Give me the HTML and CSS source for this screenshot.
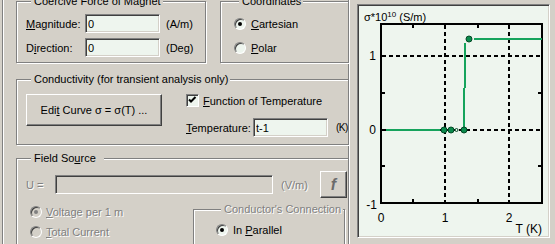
FILE: index.html
```html
<!DOCTYPE html>
<html lang="en">
<head>
  <meta charset="UTF-8">
  <title>Magnet Properties</title>
  <link rel="stylesheet" href="styles.css">
</head>
<body>
  <div class="page">
    <div class="panel">
      <div class="row-top">
        <div class="group g-magnet">
          <div class="group-title">Coercive Force of Magnet</div>
          <div class="field first">
            <label class="lbl"><u>M</u>agnitude:</label>
            <input class="edit" type="text" value="0">
            <span class="unit">(A/m)</span>
          </div>
          <div class="field">
            <label class="lbl">D<u>i</u>rection:</label>
            <input class="edit" type="text" value="0">
            <span class="unit">(Deg)</span>
          </div>
        </div>
        <div class="group g-coords">
          <div class="group-title">Coordinates</div>
          <div class="option first"><span class="radio on"></span><span><u>C</u>artesian</span></div>
          <div class="option second"><span class="radio"></span><span><u>P</u>olar</span></div>
        </div>
      </div>

      <div class="group g-cond">
        <div class="group-title">Conductivity (for transient analysis only)</div>
        <div class="cond-body">
          <button class="btn btn-curve">Edi<u>t</u> Curve σ = σ(T) ...</button>
          <div class="cond-right">
            <div class="option"><span class="check"><svg width="11" height="11" viewBox="0 0 11 11"><polyline points="2,4.5 4,6.5 8.5,2" fill="none" stroke="#000" stroke-width="2"/></svg></span><span><u>F</u>unction of Temperature</span></div>
            <div class="field temp">
              <label class="lbl lbl-temp"><u>T</u>emperature:</label>
              <input class="edit" type="text" value="t-1">
              <span class="unit unit-k">(K)</span>
            </div>
          </div>
        </div>
      </div>

      <div class="group g-source">
        <div class="group-title">Field So<u>u</u>rce&nbsp;&nbsp;</div>
        <div class="u-row">
          <label class="lbl lbl-u off">U =</label>
          <input class="edit edit-u" type="text" value="" disabled>
          <span class="unit unit-v off">(V/m)</span>
          <button class="btn btn-f" disabled>f</button>
        </div>
        <div class="source-body">
          <div class="source-left">
            <div class="option off"><span class="radio on dim"></span><span><u>V</u>oltage per 1 m</span></div>
            <div class="option off"><span class="radio dim"></span><span><u>T</u>otal Current</span></div>
          </div>
          <div class="group g-conn">
            <div class="group-title off">Conductor's Connection</div>
            <div class="option"><span class="radio on"></span><span>In <u>P</u>arallel</span></div>
          </div>
        </div>
      </div>
    </div>

    <div class="chart">
      <svg width="189" height="230" viewBox="0 0 189 230">
        <g stroke="#000" stroke-width="2" stroke-dasharray="4 3" fill="none">
          <line x1="86" y1="19" x2="86" y2="197"/>
          <line x1="150" y1="19" x2="150" y2="197"/>
          <line x1="23" y1="50" x2="183" y2="50"/>
          <line x1="23" y1="124" x2="183" y2="124"/>
        </g>
        <rect x="22" y="18" width="161" height="179" fill="none" stroke="#000" stroke-width="2"/>
        <g stroke="#000" stroke-width="2">
          <line x1="54" y1="18" x2="54" y2="22"/>
          <line x1="119" y1="18" x2="119" y2="22"/>
          <line x1="54" y1="193" x2="54" y2="197"/>
          <line x1="119" y1="193" x2="119" y2="197"/>
          <line x1="22" y1="87" x2="26" y2="87"/>
          <line x1="22" y1="160" x2="26" y2="160"/>
          <line x1="179" y1="87" x2="183" y2="87"/>
          <line x1="179" y1="160" x2="183" y2="160"/>
        </g>
        <g stroke="#16a35c" stroke-width="2" fill="none">
          <line x1="27" y1="124" x2="81" y2="124"/>
          <line x1="105" y1="124" x2="105" y2="82"/>
          <line x1="106" y1="82" x2="106" y2="37"/>
          <line x1="115" y1="33" x2="183" y2="33"/>
        </g>
        <g fill="#0b8a4c" stroke="#044a26" stroke-width="1">
          <circle cx="85" cy="124" r="3"/>
          <circle cx="92" cy="124" r="3"/>
          <circle cx="105" cy="124" r="3"/>
          <circle cx="110" cy="33" r="3"/>
        </g>
        <circle cx="97.5" cy="124" r="1.5" fill="#eef5ee" stroke="#044a26" stroke-width="1"/>
        <g class="axis-text">
          <text x="5" y="15" class="title">σ*10<tspan class="sup" dy="-4">10</tspan><tspan dy="4"> (S/m)</tspan></text>
          <text x="17" y="54" text-anchor="end">1</text>
          <text x="17" y="128" text-anchor="end">0</text>
          <text x="18" y="203" text-anchor="end">-1</text>
          <text x="22" y="216" text-anchor="middle">0</text>
          <text x="86" y="216" text-anchor="middle">1</text>
          <text x="150" y="216" text-anchor="middle">2</text>
          <text x="183" y="227" text-anchor="end">T (K)</text>
        </g>
      </svg>
    </div>
  </div>
</body>
</html>
```

FILE: styles.css
```css
body {
  margin: 0;
  background-color: #d4d0c8;
  color: #000000;
  font-family: "Liberation Sans", Arial, sans-serif;
  font-size: 11px;
  overflow: hidden;
}

u {
  text-decoration-thickness: 1px;
  text-underline-offset: 1px;
}

.page {
  display: flex;
  align-items: flex-start;
  height: 244px;
}

/* left scrolled panel */
.panel {
  flex: none;
  margin-left: 2px;
  width: 333px;
  height: 260px;
  padding: 1px 0 0 13px;
  border-left: 1px solid #808080;
  border-right: 1px solid #ffffff;
  box-shadow: inset 1px 0 #ffffff, inset -1px 0 #808080;
  overflow: hidden;
}

.group {
  box-sizing: border-box;
  flex: none;
  border: 1px solid #808080;
  box-shadow: inset 1px 1px #ffffff, 1px 1px #ffffff;
}

.group-title {
  display: table;
  margin: -7px 0 0 5px;
  padding: 0 2px 0 3px;
  line-height: 13px;
  background-color: #d4d0c8;
  white-space: nowrap;
}

.off {
  color: #808080;
  text-shadow: 1px 1px #ffffff;
}

.row-top {
  display: flex;
  gap: 14px;
}

.g-magnet {
  width: 190px;
  padding: 0 0 5px 9px;
}

.g-coords {
  width: 129px;
  padding-left: 13px;
}

.field {
  display: flex;
  align-items: center;
  height: 19px;
  margin-top: 5px;
  white-space: nowrap;
}

.field.first {
  margin-top: 6px;
}

.lbl {
  flex: none;
  width: 59px;
}

.edit {
  box-sizing: border-box;
  flex: none;
  width: 75px;
  height: 19px;
  margin: 0;
  padding: 0 2px;
  font: inherit;
  color: #000000;
  background-color: #eef5ee;
  border: 1px solid;
  border-color: #808080 #ffffff #ffffff #808080;
  box-shadow: inset 1px 1px #404040, inset -1px -1px #d4d0c8;
  outline: none;
}

.unit {
  flex: none;
  margin-left: 6px;
}

.option {
  display: flex;
  align-items: center;
  gap: 5px;
  height: 12px;
  white-space: nowrap;
}

.g-coords .option.first {
  margin-top: 10px;
}

.g-coords .option.second {
  margin-top: 12px;
}

.radio {
  box-sizing: border-box;
  display: flex;
  align-items: center;
  justify-content: center;
  flex: none;
  width: 12px;
  height: 12px;
  border-radius: 50%;
  background-color: #eef5ee;
  border: 1px solid;
  border-color: #808080 #ffffff #ffffff #808080;
  box-shadow: inset 1px 1px #404040;
}

.radio.on::after {
  content: "";
  width: 4px;
  height: 4px;
  border-radius: 50%;
  background-color: #000000;
}

.radio.dim {
  background-color: #d4d0c8;
}

.radio.dim::after {
  background-color: #808080;
}

.check {
  box-sizing: border-box;
  display: flex;
  flex: none;
  width: 13px;
  height: 13px;
  background-color: #eef5ee;
  border: 1px solid;
  border-color: #808080 #ffffff #ffffff #808080;
  box-shadow: inset 1px 1px #404040;
}

/* conductivity */
.g-cond {
  width: 333px;
  margin-top: 16px;
  padding: 0 0 7px 9px;
}

.cond-body {
  display: flex;
  align-items: flex-start;
  margin-top: 8px;
}

.btn {
  box-sizing: border-box;
  flex: none;
  margin: 0;
  padding: 0;
  font: inherit;
  color: #000000;
  background-color: #d4d0c8;
  border: 1px solid;
  border-color: #ffffff #404040 #404040 #ffffff;
  box-shadow: inset -1px -1px #808080;
}

.btn-curve {
  width: 136px;
  height: 32px;
}

.cond-right {
  flex: none;
  margin-left: 24px;
}

.cond-right .option {
  height: 13px;
  gap: 4px;
}

.field.temp {
  margin-top: 11px;
}

.lbl-temp {
  width: 67px;
}

.unit-k {
  margin-left: 8px;
  font-size: 10px;
  letter-spacing: -0.5px;
}

/* field source */
.g-source {
  width: 333px;
  margin-top: 13px;
  padding: 0 0 20px 9px;
}

.u-row {
  display: flex;
  align-items: center;
  height: 27px;
  margin-top: 6px;
}

.lbl-u {
  width: 29px;
}

.edit-u {
  width: 218px;
  background-color: #d4d0c8;
}

.unit-v {
  width: 39px;
  margin-left: 8px;
}

.btn-f {
  width: 27px;
  height: 27px;
  font-size: 16px;
  font-weight: bold;
  font-style: italic;
  color: #6b6b6b;
}

.source-body {
  display: flex;
  align-items: flex-start;
}

.source-left {
  flex: none;
  width: 163px;
  padding-left: 4px;
}

.source-left .option {
  margin-top: 8px;
  gap: 4px;
}

.g-conn {
  width: 152px;
  margin-top: 11px;
  padding: 0 0 20px 22px;
}

.g-conn .option {
  margin-top: 8px;
}

/* chart */
.chart {
  box-sizing: border-box;
  flex: none;
  width: 193px;
  height: 234px;
  margin: 4px 0 0 7px;
  background-color: #eef5ee;
  border: 1px solid;
  border-color: #808080 #ffffff #ffffff #808080;
  box-shadow: inset 1px 1px #404040, inset -1px -1px #d4d0c8;
  padding: 1px;
}

.chart svg {
  display: block;
}

.axis-text text {
  font-family: "Liberation Sans", Arial, sans-serif;
  font-size: 12px;
  fill: #000000;
}

.axis-text .title {
  font-size: 11px;
}

.axis-text .sup {
  font-size: 8px;
}
```
